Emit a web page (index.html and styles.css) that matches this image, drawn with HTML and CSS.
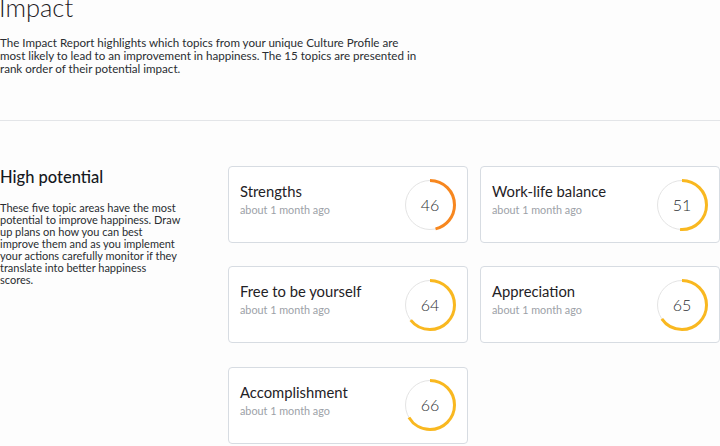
FILE: index.html
```html
<!DOCTYPE html>
<html>
<head>
<meta charset="utf-8">
<link rel="stylesheet" href="styles.css">
</head>
<body>
<header class="intro">
  <h1 class="title">Impact</h1>
  <p class="lead">The Impact Report highlights which topics from your unique Culture Profile are most likely to lead to an improvement in happiness. The 15 topics are presented in rank order of their potential impact.</p>
</header>
<hr class="rule">
<section class="group">
  <div class="group-info">
    <h2 class="group-title">High potential</h2>
    <p class="group-desc">These five topic areas have the most potential to improve happiness. Draw up plans on how you can best improve them and as you implement your actions carefully monitor if they translate into better happiness scores.</p>
  </div>
  <div class="cards">
    <div class="card">
      <div class="card-text"><div class="card-title">Strengths</div><div class="card-sub">about 1 month ago</div></div>
      <div class="gauge">
        <svg width="52" height="52" viewBox="0 0 52 52"><circle cx="26" cy="26" r="24.5" class="track"/><circle cx="26" cy="26" r="24.5" class="arc orange" stroke-dasharray="70.8 200" transform="rotate(-90 26 26)"/></svg>
        <span class="num">46</span>
      </div>
    </div>
    <div class="card">
      <div class="card-text"><div class="card-title">Work-life balance</div><div class="card-sub">about 1 month ago</div></div>
      <div class="gauge">
        <svg width="52" height="52" viewBox="0 0 52 52"><circle cx="26" cy="26" r="24.5" class="track"/><circle cx="26" cy="26" r="24.5" class="arc yellow" stroke-dasharray="78.5 200" transform="rotate(-90 26 26)"/></svg>
        <span class="num">51</span>
      </div>
    </div>
    <div class="card">
      <div class="card-text"><div class="card-title">Free to be yourself</div><div class="card-sub">about 1 month ago</div></div>
      <div class="gauge">
        <svg width="52" height="52" viewBox="0 0 52 52"><circle cx="26" cy="26" r="24.5" class="track"/><circle cx="26" cy="26" r="24.5" class="arc yellow" stroke-dasharray="98.5 200" transform="rotate(-90 26 26)"/></svg>
        <span class="num">64</span>
      </div>
    </div>
    <div class="card">
      <div class="card-text"><div class="card-title">Appreciation</div><div class="card-sub">about 1 month ago</div></div>
      <div class="gauge">
        <svg width="52" height="52" viewBox="0 0 52 52"><circle cx="26" cy="26" r="24.5" class="track"/><circle cx="26" cy="26" r="24.5" class="arc yellow" stroke-dasharray="100 200" transform="rotate(-90 26 26)"/></svg>
        <span class="num">65</span>
      </div>
    </div>
    <div class="card">
      <div class="card-text"><div class="card-title">Accomplishment</div><div class="card-sub">about 1 month ago</div></div>
      <div class="gauge">
        <svg width="52" height="52" viewBox="0 0 52 52"><circle cx="26" cy="26" r="24.5" class="track"/><circle cx="26" cy="26" r="24.5" class="arc yellow" stroke-dasharray="101.6 200" transform="rotate(-90 26 26)"/></svg>
        <span class="num">66</span>
      </div>
    </div>
  </div>
</section>
</body>
</html>
```

FILE: styles.css
```css
html, body {
  margin: 0;
  padding: 0;
  background: #fdfdfd;
  color: #1f2226;
  font-family: "Lato", "Open Sans", sans-serif;
}
.title {
  margin: -8px 0 0 -1px;
  font-size: 25.5px;
  font-weight: 300;
  line-height: 30px;
  color: #1d2024;
}
.lead {
  margin: 14px 0 0 0;
  width: 420px;
  font-size: 11.6px;
  line-height: 13px;
  color: #2a2d31;
}
.rule {
  margin: 45px 0 0 0;
  border: 0;
  border-top: 1px solid #e3e5e8;
  height: 0;
}
.group {
  display: flex;
  padding-top: 45px;
}
.group-info {
  width: 228px;
  flex: none;
}
.group-title {
  margin: 1px 0 0 0;
  font-size: 16.5px;
  font-weight: 500;
  line-height: 20px;
  color: #16191d;
}
.group-desc {
  margin: 15px 0 0 0;
  width: 181px;
  font-size: 11px;
  line-height: 12px;
  color: #2a2d31;
}
.cards {
  display: grid;
  grid-template-columns: 240px 240px;
  column-gap: 12px;
  row-gap: 23.3px;
}
.card {
  box-sizing: border-box;
  height: 77px;
  border: 1px solid #d7dce2;
  border-radius: 4px;
  background: #fff;
  display: flex;
  align-items: center;
  justify-content: space-between;
  padding: 0 11px;
}
.card-text {
  align-self: flex-start;
  padding-top: 15px;
}
.card-title {
  font-size: 14.8px;
  line-height: 18px;
  color: #1f2226;
}
.card-sub {
  margin-top: 3px;
  font-size: 10.8px;
  line-height: 14px;
  color: #9ca1a7;
}
.gauge {
  position: relative;
  width: 52px;
  height: 52px;
}
.gauge svg {
  display: block;
}
.track {
  fill: none;
  stroke: #e4e4e4;
  stroke-width: 1;
}
.arc {
  fill: none;
  stroke-width: 3;
}
.orange { stroke: #f7871f; }
.yellow { stroke: #f9b820; }
.num {
  position: absolute;
  left: 0;
  top: 0;
  width: 52px;
  line-height: 52px;
  text-align: center;
  font-size: 16px;
  font-weight: 300;
  color: #2a2d31;
}
```
